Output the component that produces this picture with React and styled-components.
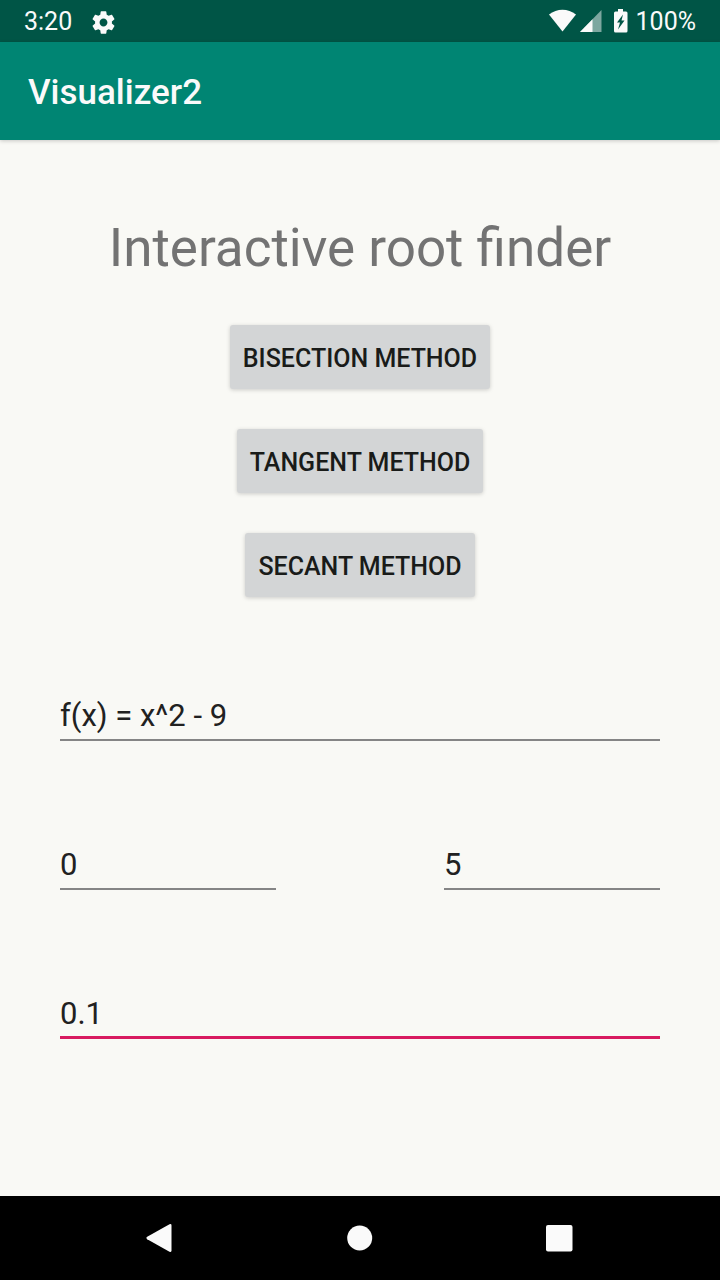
import React from "react";
import styled, { createGlobalStyle } from "styled-components";

const GlobalStyle = createGlobalStyle`
  *, *::before, *::after { box-sizing: border-box; }
  body {
    margin: 0;
    background: #f9f9f5;
    font-family: Roboto, "Noto Sans", sans-serif;
    -webkit-font-smoothing: antialiased;
  }
`;

const Screen = styled.div`
  display: flex;
  flex-direction: column;
  min-height: 100vh;
`;

const StatusBar = styled.div`
  display: flex;
  align-items: center;
  justify-content: space-between;
  height: 42px;
  padding: 2px 24px 0;
  background: #005546;
  color: #fafafa;
  font-size: 25px;
  line-height: 30px;
`;

const StatusGroup = styled.div`
  display: flex;
  align-items: center;
  gap: ${({ $gap }) => $gap}px;
`;

const Icon = styled.svg`
  display: block;
  flex: none;
  fill: #fafafa;
`;

const AppBar = styled.header`
  display: flex;
  align-items: center;
  height: 98px;
  padding: 4px 28px 0;
  background: #008573;
  box-shadow: 0 1px 4px rgba(0, 0, 0, 0.2);
`;

const AppTitle = styled.div`
  color: #fafafa;
  font-size: 35px;
  font-weight: 500;
  line-height: 42px;
`;

const Main = styled.main`
  flex: 1;
  display: flex;
  flex-direction: column;
  padding: 77px 60px 60px;
`;

const Heading = styled.h1`
  margin: 0;
  color: #737373;
  font-size: 53px;
  font-weight: 400;
  line-height: 62px;
  text-align: center;
`;

const Methods = styled.div`
  display: flex;
  flex-direction: column;
  align-items: center;
  gap: 40px;
  margin-top: 46px;
`;

const MethodButton = styled.button`
  height: 64px;
  padding: 4px 13px 0;
  border: 0;
  border-radius: 3px;
  background: #d3d5d6;
  box-shadow: 0 1px 4px rgba(0, 0, 0, 0.18);
  color: #191b19;
  font-family: inherit;
  font-size: 25px;
  font-weight: 500;
  line-height: 30px;
  text-transform: uppercase;
  cursor: pointer;
`;

const Form = styled.form`
  display: flex;
  flex-direction: column;
  gap: 96px;
  margin-top: 91px;
`;

const Interval = styled.div`
  display: grid;
  grid-template-columns: 36fr 28fr 36fr;

  & > :last-child { grid-column: 3; }
`;

const Field = styled.input`
  display: block;
  width: 100%;
  height: 53px;
  padding: 2px 0 0;
  border: 0;
  border-radius: 0;
  outline: 0;
  background: linear-gradient(
    ${({ $active }) => ($active ? "#d81b60, #d81b60" : "#858585, #858585")}
  ) bottom / 100% ${({ $active }) => ($active ? 3 : 2)}px no-repeat;
  color: #212121;
  font-family: inherit;
  font-size: 31px;
  line-height: 38px;
`;

const NavBar = styled.nav`
  display: flex;
  height: 84px;
  padding: 0 60px;
  background: #000;
`;

const NavButton = styled.button`
  flex: 1;
  display: flex;
  align-items: center;
  justify-content: center;
  padding: 0;
  border: 0;
  background: none;
  cursor: pointer;
`;

const METHODS = ["Bisection method", "Tangent method", "Secant method"];

export default function App() {
  return (
    <Screen>
      <GlobalStyle />
      <StatusBar>
        <StatusGroup $gap={18}>
          <span>3:20</span>
          <Icon width="27" height="27" viewBox="0 0 24 24" aria-hidden="true">
            <path d="M19.43 12.98c.04-.32.07-.64.07-.98s-.03-.66-.07-.98l2.11-1.65c.19-.15.24-.42.12-.64l-2-3.46c-.12-.22-.39-.3-.61-.22l-2.49 1c-.52-.4-1.08-.73-1.69-.98l-.38-2.65C14.46 2.18 14.25 2 14 2h-4c-.25 0-.46.18-.49.42l-.38 2.65c-.61.25-1.17.59-1.69.98l-2.49-1c-.23-.09-.49 0-.61.22l-2 3.46c-.13.22-.07.49.12.64l2.11 1.65c-.04.32-.07.65-.07.98s.03.66.07.98l-2.11 1.65c-.19.15-.24.42-.12.64l2 3.46c.12.22.39.3.61.22l2.49-1c.52.4 1.08.73 1.69.98l.38 2.65c.03.24.24.42.49.42h4c.25 0 .46-.18.49-.42l.38-2.65c.61-.25 1.17-.59 1.69-.98l2.49 1c.23.09.49 0 .61-.22l2-3.46c.12-.22.07-.49-.12-.64l-2.11-1.65zM12 15.5c-1.93 0-3.5-1.57-3.5-3.5s1.57-3.5 3.5-3.5 3.5 1.57 3.5 3.5-1.57 3.5-3.5 3.5z" />
          </Icon>
        </StatusGroup>
        <StatusGroup $gap={7}>
          <Icon width="80" height="26" viewBox="0 0 80 26" aria-hidden="true">
            <path d="M0 5.500C8-.800 19-.800 27 5.500L13.500 22.500z" />
            <path d="M52.500 1v22H31z" opacity="0.5" />
            <path d="M43.500 10.200V23H31z" />
            <path
              fillRule="evenodd"
              d="M69 0h5v2.500h3q1.500 0 1.500 1.500v18q0 1.500-1.500 1.500H66.500q-1.500 0-1.500-1.500V4q0-1.500 1.500-1.500H69zM74 5.500l-6 8h3l-2 7 6.500-9h-3z"
            />
          </Icon>
          <span>100%</span>
        </StatusGroup>
      </StatusBar>
      <AppBar>
        <AppTitle>Visualizer2</AppTitle>
      </AppBar>
      <Main>
        <Heading>Interactive root finder</Heading>
        <Methods>
          {METHODS.map((name) => (
            <MethodButton key={name} type="button">{name}</MethodButton>
          ))}
        </Methods>
        <Form onSubmit={(event) => event.preventDefault()}>
          <Field aria-label="Function" defaultValue="f(x) = x^2 - 9" />
          <Interval>
            <Field aria-label="Interval start" defaultValue="0" />
            <Field aria-label="Interval end" defaultValue="5" />
          </Interval>
          <Field $active aria-label="Tolerance" defaultValue="0.1" />
        </Form>
      </Main>
      <NavBar>
        <NavButton type="button" aria-label="Back">
          <Icon width="28" height="28" viewBox="0 0 28 28">
            <path d="M23.500.300Q25.500-.600 25.500 1.500v25q0 2.100-2 1.200L1.200 15.200q-1.600-1.200 0-2.400z" />
          </Icon>
        </NavButton>
        <NavButton type="button" aria-label="Home">
          <Icon width="26" height="26" viewBox="0 0 26 26">
            <circle cx="12.700" cy="13" r="12.500" />
          </Icon>
        </NavButton>
        <NavButton type="button" aria-label="Recent apps">
          <Icon width="28" height="28" viewBox="0 0 28 28">
            <rect x="0" y="1" width="26.500" height="26.500" rx="2" />
          </Icon>
        </NavButton>
      </NavBar>
    </Screen>
  );
}
